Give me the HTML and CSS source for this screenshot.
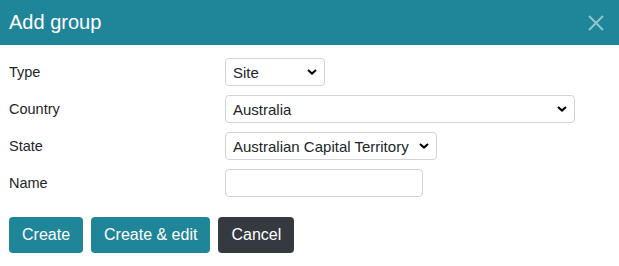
FILE: index.html
```html
<!DOCTYPE html>
<html lang="en">

<head>
    <meta charset="UTF-8">
    <meta name="viewport" content="width=device-width, initial-scale=1.0">
    <title>Add group</title>
    <link rel="stylesheet" href="styles.css">
</head>

<body>
    <div class="modal">
        <div class="modal-header">
            <h5 class="modal-title">Add group</h5>
            <button class="close" aria-label="Close">
                <svg width="16" height="16" viewBox="0 0 16 16">
                    <path d="M1 1L15 15M15 1L1 15" stroke="currentColor" stroke-width="2" fill="none"/>
                </svg>
            </button>
        </div>

        <form class="modal-body">
            <div class="row">
                <label for="type">Type</label>
                <select id="type" class="field type-field">
                    <option>Site</option>
                </select>
            </div>
            <div class="row">
                <label for="country">Country</label>
                <select id="country" class="field country-field">
                    <option>Australia</option>
                </select>
            </div>
            <div class="row">
                <label for="state">State</label>
                <select id="state" class="field state-field">
                    <option>Australian Capital Territory</option>
                </select>
            </div>
            <div class="row">
                <label for="name">Name</label>
                <input id="name" type="text" class="field name-field">
            </div>

            <div class="actions">
                <button type="button" class="btn btn-primary">Create</button>
                <button type="button" class="btn btn-primary">Create &amp; edit</button>
                <button type="button" class="btn btn-dark">Cancel</button>
            </div>
        </form>
    </div>
</body>

</html>
```

FILE: styles.css
```css
html,
body {
    margin: 0;
    padding: 0;
    background: #fff;
    font-family: "Liberation Sans", Arial, sans-serif;
    color: #212529;
}

.modal-header {
    display: flex;
    align-items: center;
    justify-content: space-between;
    height: 45px;
    padding: 0 15px 0 9px;
    background: #1f8599;
}

.modal-title {
    margin: 0;
    font-size: 20px;
    font-weight: normal;
    line-height: 45px;
    color: #fff;
}

.close {
    display: flex;
    padding: 0;
    margin-top: 1px;
    border: 0;
    background: none;
    color: #8fc5cf;
}

.modal-body {
    display: flex;
    flex-direction: column;
    gap: 9px;
    padding: 13px 9px 0;
}

.row {
    display: grid;
    grid-template-columns: 216px auto;
    align-items: center;
    justify-items: start;
}

label {
    font-size: 14.5px;
}

.field {
    box-sizing: border-box;
    height: 28px;
    border: 1px solid #ced4da;
    border-radius: 4px;
    background-color: #fff;
    font-family: inherit;
    font-size: 15px;
    color: #212529;
    padding: 0 7px;
}

select.field {
    appearance: none;
    -webkit-appearance: none;
    padding-right: 27px;
    background-image: url("data:image/svg+xml,%3Csvg xmlns='http://www.w3.org/2000/svg' width='10' height='6' viewBox='0 0 10 6'%3E%3Cpath d='M1 1l4 3.6L9 1' fill='none' stroke='%23000' stroke-width='2'/%3E%3C/svg%3E");
    background-repeat: no-repeat;
    background-position: right 7px center;
}

.type-field {
    width: 100px;
}

.country-field {
    width: 350px;
}

.name-field {
    width: 198px;
}

.actions {
    display: flex;
    gap: 8px;
    margin-top: 11px;
}

.btn {
    height: 36px;
    padding: 0 12px;
    border: 1px solid transparent;
    border-radius: 4px;
    font-family: inherit;
    font-size: 16px;
    color: #fff;
}

.btn-primary {
    background: #1f8599;
}

.btn-dark {
    background: #343a40;
}
```
